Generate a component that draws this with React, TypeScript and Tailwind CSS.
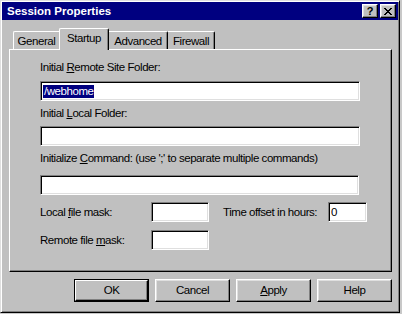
import React from "react";

const raised =
  "border border-t-white border-l-white border-r-black border-b-black shadow-[inset_-1px_-1px_#808080,inset_1px_1px_#dfdfdf]";
const sunken =
  "border border-t-[#808080] border-l-[#808080] border-r-white border-b-white shadow-[inset_1px_1px_#000,inset_-1px_-1px_#dfdfdf] bg-white";

function Field({ className = "", children }: { className?: string; children?: React.ReactNode }) {
  return <div className={`${sunken} h-[20px] flex items-center pl-[2px] ${className}`}>{children}</div>;
}

function Btn({ children, def = false }: { children: React.ReactNode; def?: boolean }) {
  if (def) {
    return (
      <div className="w-[75px] h-[23px] border border-black flex">
        <div className="flex-1 border border-t-white border-l-white border-r-black border-b-black shadow-[inset_-1px_-1px_#808080] flex items-center justify-center">
          {children}
        </div>
      </div>
    );
  }
  return (
    <div className={`w-[75px] h-[23px] ${raised} flex items-center justify-center`}>{children}</div>
  );
}

export default function App() {
  return (
    <div className="w-[402px] h-[314px] bg-[#c8c8c8] flex font-['Liberation_Sans',Arial,sans-serif] text-[11.5px] tracking-[-0.45px] text-black overflow-hidden leading-[13px]">
      <div className="w-[400px] h-[313px] bg-[#c0c0c0] border border-t-[#dfdfdf] border-l-[#dfdfdf] border-r-black border-b-black shadow-[inset_1px_1px_#fff,inset_-1px_-1px_#808080] p-[1px] flex flex-col">
        {/* title bar */}
        <div className="h-[18px] bg-[#000080] flex items-center pl-[5px] pr-[2px]">
          <span className="text-white font-bold text-[11.5px] tracking-normal">Session Properties</span>
          <div className="ml-auto flex gap-[2px]">
            <div className={`w-[16px] h-[14px] bg-[#c0c0c0] ${raised} flex items-center justify-center font-bold text-[11px] leading-none tracking-normal`}>
              ?
            </div>
            <div className={`w-[16px] h-[14px] bg-[#c0c0c0] ${raised} flex items-center justify-center`}>
              <svg width="8" height="7" viewBox="0 0 8 7">
                <path d="M0 0h2v1h1v1h2V1h1V0h2v1H7v1H6v1H5v1h1v1h1v1h1v1H6V6H5V5H3v1H2v1H0V6h1V5h1V4h1V3H2V2H1V1H0z" fill="#000" />
              </svg>
            </div>
          </div>
        </div>

        {/* tabs */}
        <div className="mt-[8px] ml-[8px] flex items-end h-[21px] relative z-10">
          <div className="w-[46px] h-[18px] mt-auto border-l border-t border-white rounded-tl-[2px] flex items-center justify-center pt-[1px] ml-[3px]">
            General
          </div>
          <div className="w-[50px] h-[22px] -mb-[1px] bg-[#c0c0c0] border-l border-t border-white border-r border-r-black rounded-tl-[2px] rounded-tr-[2px] shadow-[inset_-1px_0_#808080] flex items-center justify-center pb-[3px]">
            Startup
          </div>
          <div className="w-[59px] h-[18px] border-t border-white border-r border-r-black rounded-tr-[2px] shadow-[inset_-1px_0_#808080] flex items-center justify-center pt-[1px]">
            Advanced
          </div>
          <div className="w-[47px] h-[18px] border-t border-white border-r border-r-black rounded-tr-[2px] shadow-[inset_-1px_0_#808080] flex items-center justify-center pt-[1px]">
            Firewall
          </div>
        </div>

        {/* panel */}
        <div className="ml-[7px] w-[383px] h-[223px] border border-t-white border-l-white border-r-black border-b-black shadow-[inset_-1px_-1px_#808080] pl-[30px] pt-[11px] flex flex-col">
          <div>
            Initial <u>R</u>emote Site Folder:
          </div>
          <Field className="mt-[7px] w-[320px]">
            <span className="bg-[#000080] text-white px-[1px]">/webhome</span>
          </Field>
          <div className="mt-[6px]">
            Initial <u>L</u>ocal Folder:
          </div>
          <Field className="mt-[6px] w-[320px]" />
          <div className="mt-[6px]">
            Initialize <u>C</u>ommand: (use ';' to separate multiple commands)
          </div>
          <Field className="mt-[10px] w-[319px]" />
          <div className="mt-[7px] flex items-center">
            <div className="w-[111px]">
              Local <u>f</u>ile mask:
            </div>
            <Field className="w-[58px]" />
            <div className="ml-[14px] w-[105px] whitespace-nowrap">Time offset in hours:</div>
            <Field className="w-[39px]">0</Field>
          </div>
          <div className="mt-[8px] flex items-center">
            <div className="w-[111px]">
              Remote file <u>m</u>ask:
            </div>
            <Field className="w-[58px]" />
          </div>
        </div>

        {/* buttons */}
        <div className="mt-[7px] ml-[72px] flex gap-[6px]">
          <Btn def>OK</Btn>
          <Btn>Cancel</Btn>
          <Btn>
            <span>
              <u>A</u>pply
            </span>
          </Btn>
          <Btn>Help</Btn>
        </div>
      </div>
    </div>
  );
}
